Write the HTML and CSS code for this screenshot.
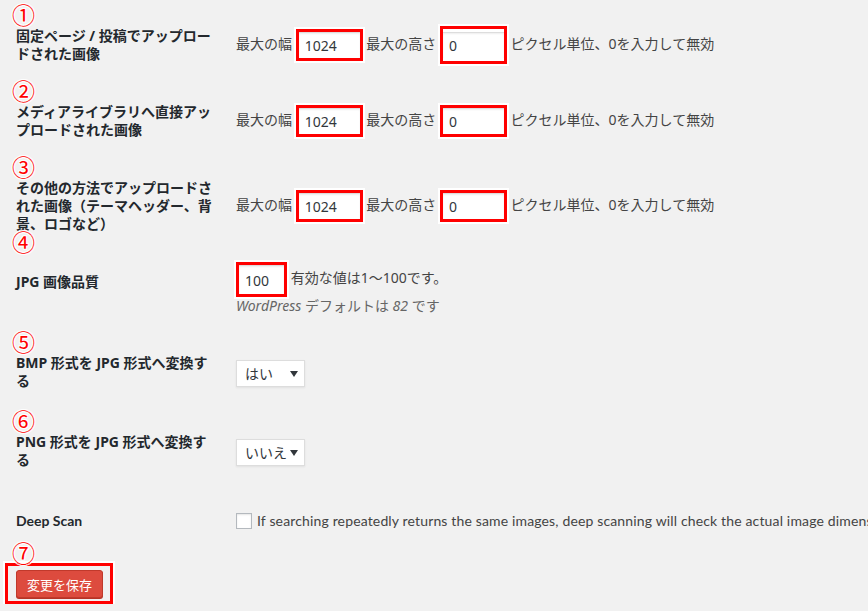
FILE: index.html
```html
<!DOCTYPE html>
<html lang="ja">
<head>
    <meta charset="UTF-8">
    <title>画像のリサイズ設定</title>
    <link rel="stylesheet" href="styles.css">
</head>
<body>
    <div class="wrap">
        <div class="row">
            <div class="th"><span class="mark">①</span>固定ページ / 投稿でアップロー<br>ドされた画像</div>
            <div class="td">
                最大の幅 <span class="hl"><input class="num" type="text" value="1024"></span>
                最大の高さ <span class="hl hl-tall"><input class="num" type="text" value="0"></span>
                ピクセル単位、0を入力して無効
            </div>
        </div>
        <div class="row">
            <div class="th"><span class="mark">②</span>メディアライブラリへ直接アッ<br>プロードされた画像</div>
            <div class="td">
                最大の幅 <span class="hl"><input class="num" type="text" value="1024"></span>
                最大の高さ <span class="hl"><input class="num" type="text" value="0"></span>
                ピクセル単位、0を入力して無効
            </div>
        </div>
        <div class="row">
            <div class="th"><span class="mark">③</span>その他の方法でアップロードさ<br>れた画像（テーマヘッダー、背<br>景、ロゴなど）</div>
            <div class="td">
                最大の幅 <span class="hl"><input class="num" type="text" value="1024"></span>
                最大の高さ <span class="hl"><input class="num" type="text" value="0"></span>
                ピクセル単位、0を入力して無効
            </div>
        </div>
        <div class="row row-top">
            <div class="th"><span class="mark mark-high">④</span>JPG 画像品質</div>
            <div class="td td-quality">
                <span class="hl"><input class="num num-small" type="text" value="100"></span>
                有効な値は1～100です。
                <p class="desc"><em>WordPress</em> デフォルトは <em>82</em> です</p>
            </div>
        </div>
        <div class="row row-select">
            <div class="th"><span class="mark">⑤</span>BMP 形式を JPG 形式へ変換す<br>る</div>
            <div class="td">
                <span class="select">はい<svg class="caret" width="8" height="6" viewBox="0 0 8 6"><path d="M0 0h8L4 6z" fill="#32373c"/></svg></span>
            </div>
        </div>
        <div class="row row-select">
            <div class="th"><span class="mark">⑥</span>PNG 形式を JPG 形式へ変換す<br>る</div>
            <div class="td">
                <span class="select">いいえ<svg class="caret" width="8" height="6" viewBox="0 0 8 6"><path d="M0 0h8L4 6z" fill="#32373c"/></svg></span>
            </div>
        </div>
        <div class="row">
            <div class="th th-en">Deep Scan</div>
            <div class="td td-en">
                <label class="check"><span class="box"></span>If searching repeatedly returns the same images, deep scanning will check the actual image dimensions instead of relying on metadata.</label>
            </div>
        </div>
        <div class="submit">
            <span class="mark mark-submit">⑦</span>
            <span class="hl-button"><button class="button-primary">変更を保存</button></span>
        </div>
    </div>
</body>
</html>
```

FILE: styles.css
```css
html, body {
    margin: 0;
    background: #f1f1f1;
    overflow: hidden;
}

body {
    font-family: "Noto Sans", "Noto Sans CJK JP", sans-serif;
    font-size: 14px;
    color: #444;
}

.wrap {
    padding: 7px 0 0 16px;
    width: 852px;
}

.row {
    display: grid;
    grid-template-columns: 220px 1fr;
    align-items: center;
}

.row-top {
    align-items: start;
}

.row-select .th {
    padding-bottom: 23px;
}

.th {
    position: relative;
    padding: 20px 0;
    line-height: 18px;
    font-weight: 700;
    color: #23282d;
}

.td {
    line-height: 18px;
    white-space: nowrap;
}

.td-quality {
    padding: 9px 0 19px;
}

/* annotation marks (red circled numbers) */
.mark {
    position: absolute;
    top: -3px;
    left: -4px;
    font-size: 23px;
    line-height: 20px;
    font-weight: 400;
    color: #f00;
    font-family: "Noto Sans CJK JP", sans-serif;
    text-shadow: -1px -1px 0 #fff, 1px -1px 0 #fff, -1px 1px 0 #fff, 1px 1px 0 #fff;
}

.mark-high {
    top: -22px;
}

.mark-submit {
    top: -8px;
    left: -4px;
}

/* red annotation boxes */
.hl {
    display: inline-block;
    vertical-align: middle;
    border: 3px solid #f00;
    box-shadow: 0 0 0 2px #fff;
    background: #fff;
}

.hl-tall {
    padding: 3px 0;
}

.num {
    display: block;
    box-sizing: border-box;
    width: 61px;
    height: 26px;
    margin: 0;
    padding: 0 6px;
    border: 0;
    border-top: 1px solid #ddd;
    background: #fff;
    font-family: "Noto Sans", sans-serif;
    font-size: 14px;
    color: #32373c;
    box-shadow: inset 0 1px 2px rgba(0, 0, 0, 0.07);
}

.num-small {
    width: 45px;
    height: 29px;
}

.desc {
    margin: 0;
    color: #666;
    line-height: 18px;
}

.select {
    display: inline-flex;
    align-items: center;
    box-sizing: border-box;
    width: 69px;
    height: 27px;
    padding: 0 6px 0 8px;
    vertical-align: middle;
    background: #fff;
    border: 1px solid #ddd;
    color: #32373c;
    box-shadow: 0 1px 2px rgba(0, 0, 0, 0.07);
}

.caret {
    margin-left: auto;
}

.th-en, .td-en {
    font-family: "Lato", "Noto Sans", sans-serif;
}

.th-en {
    font-size: 14px;
}

.check {
    display: flex;
    align-items: center;
    color: #444;
    letter-spacing: 0.15px;
}

.box {
    flex: none;
    width: 14px;
    height: 14px;
    margin-right: 5px;
    border: 1px solid #b4b9be;
    background: #fff;
    box-shadow: inset 0 1px 2px rgba(0, 0, 0, 0.1);
}

.submit {
    position: relative;
    padding-top: 13px;
}

.hl-button {
    display: inline-block;
    margin-left: -11px;
    padding: 4px 7px 3px 8px;
    border: 3px solid #f00;
    box-shadow: 0 0 0 2px #fff;
}

.button-primary {
    display: block;
    width: 87px;
    height: 28px;
    padding: 0;
    background: #dd4b3e;
    border: 1px solid #c0392b;
    border-radius: 3px;
    box-shadow: 0 1px 0 #b83226;
    color: #fff;
    font-family: "Noto Sans CJK JP", sans-serif;
    font-size: 13px;
}
```
